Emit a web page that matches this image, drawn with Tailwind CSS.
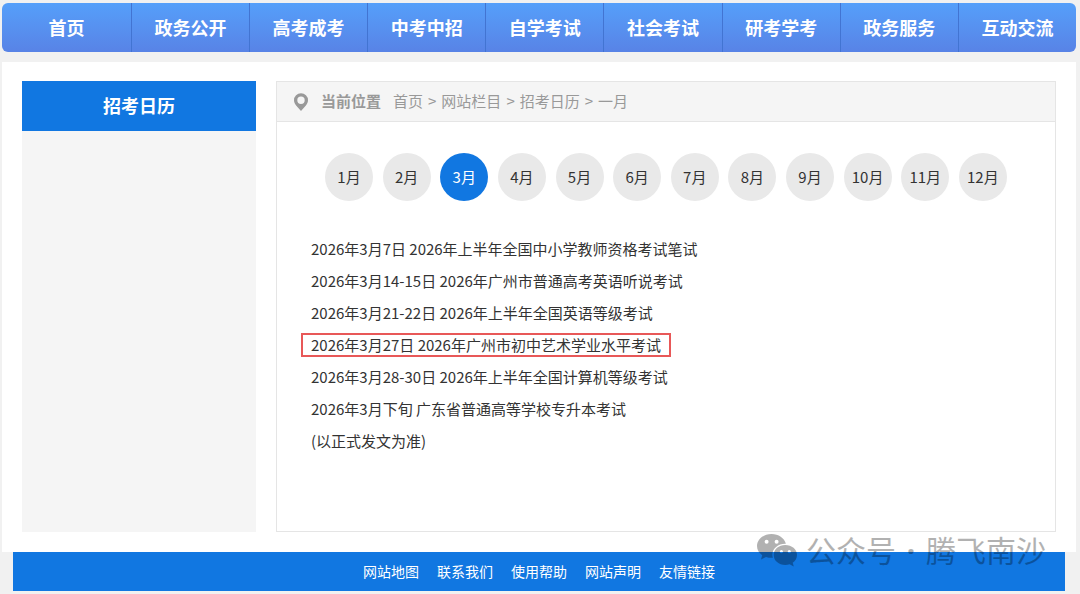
<!DOCTYPE html>
<html lang="zh-CN">
<head>
    <meta charset="UTF-8">
    <meta name="viewport" content="width=device-width, initial-scale=1.0">
    <title>招考日历</title>
    <script src="https://cdn.jsdelivr.net/npm/@tailwindcss/browser@4"></script>
</head>
<body class="bg-[#f1f1f1] font-['Noto_Sans_CJK_SC',sans-serif] text-[15px] text-[#333]">
    <div class="relative pl-0.5 pr-1 pt-[3px]">
        <!-- Main navigation -->
        <nav class="flex h-[49px] items-stretch overflow-hidden rounded-md bg-linear-to-b from-[#559ffa] to-[#5883e6] text-lg leading-[48px] font-bold text-white">
            <a href="#" class="w-[12%] text-center">首页</a>
            <a href="#" class="flex-1 border-l border-[#4274d2] text-center">政务公开</a>
            <a href="#" class="flex-1 border-l border-[#4274d2] text-center">高考成考</a>
            <a href="#" class="flex-1 border-l border-[#4274d2] text-center">中考中招</a>
            <a href="#" class="flex-1 border-l border-[#4274d2] text-center">自学考试</a>
            <a href="#" class="flex-1 border-l border-[#4274d2] text-center">社会考试</a>
            <a href="#" class="flex-1 border-l border-[#4274d2] text-center">研考学考</a>
            <a href="#" class="flex-1 border-l border-[#4274d2] text-center">政务服务</a>
            <a href="#" class="flex-1 border-l border-[#4274d2] text-center">互动交流</a>
        </nav>

        <div class="mt-[10px] flex gap-5 bg-white p-5 pt-[19px]">
            <!-- Sidebar -->
            <aside class="w-[234px] shrink-0 bg-[#f5f5f5]">
                <h2 class="bg-[#1177e1] pb-0.5 text-center text-lg leading-[48px] font-bold text-white">招考日历</h2>
            </aside>

            <main class="flex-1 border border-[#e5e5e5] pb-[74px]">
                <!-- Breadcrumb -->
                <div class="flex h-10 items-center border-b border-[#e5e5e5] bg-[#f5f5f5] pl-4 text-[#999]">
                    <svg class="mr-3 h-[18px] w-4" viewBox="0 0 16 18" fill="#999">
                        <path fill-rule="evenodd" d="M8 .3a7 7 0 0 0-7 7c0 1.900.9 3.600 2.100 5.100L8 17.900l4.900-5.500C14.100 10.900 15 9.200 15 7.300a7 7 0 0 0-7-7zm0 3.200a3.700 3.700 0 1 1 0 7.400 3.700 3.700 0 0 1 0-7.400z"/>
                    </svg>
                    <strong class="mr-3">当前位置</strong>
                    <a href="#">首页</a>
                    <span class="mx-[5px]">&gt;</span>
                    <a href="#">网站栏目</a>
                    <span class="mx-[5px]">&gt;</span>
                    <a href="#">招考日历</a>
                    <span class="mx-[5px]">&gt;</span>
                    <a href="#">一月</a>
                </div>

                <!-- Months -->
                <div class="mx-auto mt-[31px] flex max-w-[682px] justify-between">
                    <a href="#" class="flex size-12 items-center justify-center rounded-full bg-[#e9e9e9]">1月</a>
                    <a href="#" class="flex size-12 items-center justify-center rounded-full bg-[#e9e9e9]">2月</a>
                    <a href="#" class="flex size-12 items-center justify-center rounded-full bg-[#1177e1] text-white">3月</a>
                    <a href="#" class="flex size-12 items-center justify-center rounded-full bg-[#e9e9e9]">4月</a>
                    <a href="#" class="flex size-12 items-center justify-center rounded-full bg-[#e9e9e9]">5月</a>
                    <a href="#" class="flex size-12 items-center justify-center rounded-full bg-[#e9e9e9]">6月</a>
                    <a href="#" class="flex size-12 items-center justify-center rounded-full bg-[#e9e9e9]">7月</a>
                    <a href="#" class="flex size-12 items-center justify-center rounded-full bg-[#e9e9e9]">8月</a>
                    <a href="#" class="flex size-12 items-center justify-center rounded-full bg-[#e9e9e9]">9月</a>
                    <a href="#" class="flex size-12 items-center justify-center rounded-full bg-[#e9e9e9]">10月</a>
                    <a href="#" class="flex size-12 items-center justify-center rounded-full bg-[#e9e9e9]">11月</a>
                    <a href="#" class="flex size-12 items-center justify-center rounded-full bg-[#e9e9e9]">12月</a>
                </div>

                <!-- Exam dates -->
                <ul class="mt-8 pl-[34px] leading-8">
                    <li>2026年3月7日 2026年上半年全国中小学教师资格考试笔试</li>
                    <li>2026年3月14-15日 2026年广州市普通高考英语听说考试</li>
                    <li>2026年3月21-22日 2026年上半年全国英语等级考试</li>
                    <li class="flex h-8 items-center"><span class="-ml-2.5 border-2 border-[#e85858] px-2 leading-5">2026年3月27日 2026年广州市初中艺术学业水平考试</span></li>
                    <li>2026年3月28-30日 2026年上半年全国计算机等级考试</li>
                    <li>2026年3月下旬 广东省普通高等学校专升本考试</li>
                    <li>(以正式发文为准)</li>
                </ul>
            </main>
        </div>

        <footer class="mr-[11px] ml-[11px] flex h-[39px] items-center justify-center gap-[18px] bg-[#1177e1] pb-0.5 text-sm text-white">
            <a href="#">网站地图</a>
            <a href="#">联系我们</a>
            <a href="#">使用帮助</a>
            <a href="#">网站声明</a>
            <a href="#">友情链接</a>
        </footer>

        <!-- Account watermark, lies over the panel and the footer -->
        <div class="pointer-events-none absolute right-[34px] bottom-5 flex items-center gap-2 opacity-30">
            <svg class="h-[34px] w-[42px]" viewBox="0 0 42 34">
                <path fill-rule="evenodd" d="M15.500 1C7.500 1 1 6.300 1 13c0 3.800 2 7 5.200 9.200L5 26.500l5-2.600c1.700.5 3.500.9 5.700.9h1.200c-.3-1-.5-2-.5-3 0-6.300 5.800-11 12.800-11h.7C28.400 5 22.500 1 15.500 1zM10.600 6.800a2 2 0 1 1 0 4 2 2 0 0 1 0-4zm10 0a2 2 0 1 1 0 4 2 2 0 0 1 0-4z"/>
                <path fill-rule="evenodd" d="M29.300 12c-6.500 0-11.600 4.300-11.600 9.900s5.100 10 11.600 10c1.500 0 3-.3 4.300-.7l4.200 2.300-1.100-3.800c2.600-1.800 4.300-4.600 4.300-7.800C41 16.300 35.700 12 29.300 12zm-3.900 5a1.600 1.600 0 1 1 0 3.200 1.600 1.600 0 0 1 0-3.200zm7.900 0a1.600 1.600 0 1 1 0 3.200 1.600 1.600 0 0 1 0-3.200z"/>
            </svg>
            <span class="text-[30px] leading-10 text-black">公众号 <span class="mx-1 font-['Noto_Sans',sans-serif] font-bold">·</span> 腾飞南沙</span>
        </div>
    </div>
</body>
</html>
